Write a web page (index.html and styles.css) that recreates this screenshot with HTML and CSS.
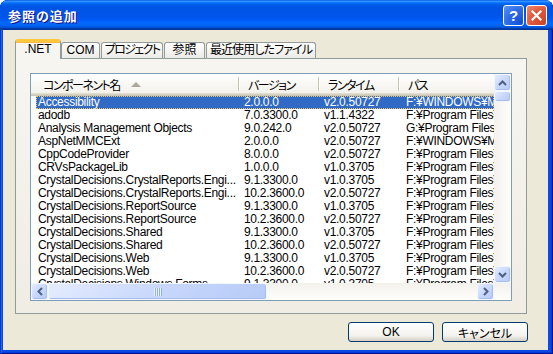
FILE: index.html
```html
<!DOCTYPE html>
<html lang="ja">
<head>
    <meta charset="UTF-8">
    <title>参照の追加</title>
    <link rel="stylesheet" href="styles.css">
</head>
<body>

    <div class="window">
        <!-- Title bar -->
        <div class="titlebar">
            <span class="title">参照の追加</span>
            <div class="caption-buttons">
                <div class="cap-btn help">?</div>
                <div class="cap-btn close">
                    <svg width="11" height="11" viewBox="0 0 11 11">
                        <path d="M1.5 1.5 L9.5 9.5 M9.5 1.5 L1.5 9.5" stroke="#ffffff" stroke-width="2.2" stroke-linecap="square" fill="none"/>
                    </svg>
                </div>
            </div>
        </div>

        <div class="client">
            <!-- Tabs -->
            <ul class="tabs">
                <li class="tab tab-net active">.NET</li>
                <li class="tab tab-com">COM</li>
                <li class="tab tab-project">プロジェクト</li>
                <li class="tab tab-ref">参照</li>
                <li class="tab tab-recent">最近使用したファイル</li>
            </ul>

            <div class="tab-panel">
                <div class="listview">
                    <div class="lv-body">
                        <div class="lv-view">
                            <div class="lv-header">
                                <div class="col-h first">コンポーネント名
                                    <svg class="sort-arrow" width="10" height="6" viewBox="0 0 10 6">
                                        <path d="M0 6 L5 1 L10 6 Z" fill="#aca899"/>
                                    </svg>
                                </div>
                                <div class="col-h">バージョン</div>
                                <div class="col-h">ランタイム</div>
                                <div class="col-h">パス</div>
                            </div>

                            <div class="lv-rows">
                                <div class="row selected"><span>Accessibility</span><span>2.0.0.0</span><span>v2.0.50727</span><span>F:¥WINDOWS¥Microsoft.NET¥Framework</span></div>
                                <div class="row"><span>adodb</span><span>7.0.3300.0</span><span>v1.1.4322</span><span>F:¥Program Files¥Microsoft.NET</span></div>
                                <div class="row"><span>Analysis Management Objects</span><span>9.0.242.0</span><span>v2.0.50727</span><span>G:¥Program Files¥Microsoft SQL</span></div>
                                <div class="row"><span>AspNetMMCExt</span><span>2.0.0.0</span><span>v2.0.50727</span><span>F:¥WINDOWS¥Microsoft.NET¥Framework</span></div>
                                <div class="row"><span>CppCodeProvider</span><span>8.0.0.0</span><span>v2.0.50727</span><span>F:¥Program Files¥Microsoft Visual</span></div>
                                <div class="row"><span>CRVsPackageLib</span><span>1.0.0.0</span><span>v1.0.3705</span><span>F:¥Program Files¥Common Files</span></div>
                                <div class="row"><span>CrystalDecisions.CrystalReports.Engi...</span><span>9.1.3300.0</span><span>v1.0.3705</span><span>F:¥Program Files¥Common Files</span></div>
                                <div class="row"><span>CrystalDecisions.CrystalReports.Engi...</span><span>10.2.3600.0</span><span>v2.0.50727</span><span>F:¥Program Files¥Common Files</span></div>
                                <div class="row"><span>CrystalDecisions.ReportSource</span><span>9.1.3300.0</span><span>v1.0.3705</span><span>F:¥Program Files¥Common Files</span></div>
                                <div class="row"><span>CrystalDecisions.ReportSource</span><span>10.2.3600.0</span><span>v2.0.50727</span><span>F:¥Program Files¥Common Files</span></div>
                                <div class="row"><span>CrystalDecisions.Shared</span><span>9.1.3300.0</span><span>v1.0.3705</span><span>F:¥Program Files¥Common Files</span></div>
                                <div class="row"><span>CrystalDecisions.Shared</span><span>10.2.3600.0</span><span>v2.0.50727</span><span>F:¥Program Files¥Common Files</span></div>
                                <div class="row"><span>CrystalDecisions.Web</span><span>9.1.3300.0</span><span>v1.0.3705</span><span>F:¥Program Files¥Common Files</span></div>
                                <div class="row"><span>CrystalDecisions.Web</span><span>10.2.3600.0</span><span>v2.0.50727</span><span>F:¥Program Files¥Common Files</span></div>
                                <div class="row"><span>CrystalDecisions.Windows.Forms</span><span>9.1.3300.0</span><span>v1.0.3705</span><span>F:¥Program Files¥Common Files</span></div>
                            </div>
                        </div>

                        <!-- Vertical scrollbar -->
                        <div class="vscroll">
                            <div class="sb-btn">
                                <svg width="9" height="6" viewBox="0 0 9 6"><path d="M1 5 L4.5 1.5 L8 5" stroke="#4d6185" stroke-width="2" fill="none"/></svg>
                            </div>
                            <div class="sb-thumb v"></div>
                            <div class="sb-track"></div>
                            <div class="sb-btn">
                                <svg width="9" height="6" viewBox="0 0 9 6"><path d="M1 1 L4.5 4.5 L8 1" stroke="#4d6185" stroke-width="2" fill="none"/></svg>
                            </div>
                        </div>
                    </div>

                    <!-- Horizontal scrollbar -->
                    <div class="hscroll-row">
                        <div class="hscroll">
                            <div class="sb-btn">
                                <svg width="6" height="9" viewBox="0 0 6 9"><path d="M5 1 L1.5 4.5 L5 8" stroke="#4d6185" stroke-width="2" fill="none"/></svg>
                            </div>
                            <div class="sb-thumb h"><span class="grip"></span></div>
                            <div class="sb-track"></div>
                            <div class="sb-btn">
                                <svg width="6" height="9" viewBox="0 0 6 9"><path d="M1 1 L4.5 4.5 L1 8" stroke="#4d6185" stroke-width="2" fill="none"/></svg>
                            </div>
                        </div>
                        <div class="sb-corner"></div>
                    </div>
                </div>
            </div>

            <div class="dialog-buttons">
                <button class="btn">OK</button>
                <button class="btn">キャンセル</button>
            </div>
        </div>
    </div>

</body>
</html>
```

FILE: styles.css
```css
/* Page */
html, body {
    margin: 0;
    padding: 0;
    background: #ffffff;
}

body {
    font-family: "Liberation Sans", "Noto Sans CJK JP", sans-serif;
    font-size: 12px;
    font-feature-settings: "palt";
    color: #000000;
}

/* XP window frame */
.window {
    width: 553px;
    height: 354px;
    display: flex;
    flex-direction: column;
    background: #0a4ae0;
    border-radius: 8px 8px 0 0;
    overflow: hidden;
    box-shadow: inset 1px 0 #0831d9, inset -1px -1px #00138c, inset 2px 0 #166aee, inset -2px -2px #003bda;
}

/* Title bar */
.titlebar {
    flex: none;
    height: 30px;
    display: flex;
    align-items: center;
    justify-content: space-between;
    padding: 0 6px 0 8px;
    background: linear-gradient(to bottom, #0058ee 0%, #3593ff 4%, #288eff 6%, #127dff 8%, #036ffc 10%, #0262ee 14%, #0057e5 20%, #0054e3 24%, #0055eb 56%, #005bf5 66%, #026afe 76%, #0062ef 86%, #0052d6 92%, #0040ab 94%, #003092 100%);
    border-radius: 8px 8px 0 0;
}

.title {
    color: #ffffff;
    font-family: "Noto Sans CJK JP", sans-serif;
    font-weight: 700;
    font-size: 13px;
    letter-spacing: 1px;
    text-shadow: 1px 1px #0f1089;
    margin-top: 1px;
}

.caption-buttons {
    display: flex;
    gap: 2px;
    margin-top: 1px;
}

.cap-btn {
    width: 21px;
    height: 21px;
    box-sizing: border-box;
    border: 1px solid #ffffff;
    border-radius: 3px;
    display: flex;
    align-items: center;
    justify-content: center;
}

.help {
    background: radial-gradient(circle at 90% 90%, #1150d8 0%, #2f6ae4 55%, #5b95f9 100%);
    color: #ffffff;
    font-family: "Liberation Sans", sans-serif;
    font-weight: 700;
    font-size: 15px;
}

.close {
    background: radial-gradient(circle at 90% 90%, #cc4628 0%, #e0573a 55%, #f08c72 100%);
}

/* Dialog body */
.client {
    flex: 1;
    margin: 0 5px 4px 3px;
    padding: 9px 0 0 12px;
    background: #ece9d8;
    display: flex;
    flex-direction: column;
}

/* Tabs */
.tabs {
    list-style: none;
    margin: 0;
    padding: 0;
    height: 19px;
    display: flex;
    align-items: flex-end;
    position: relative;
    z-index: 1;
}

.tab {
    height: 16px;
    box-sizing: border-box;
    margin-right: 1px;
    border: 1px solid #919b9c;
    border-bottom: none;
    border-radius: 3px 3px 0 0;
    background: linear-gradient(#ffffff, #ecebe6);
    line-height: 15px;
    text-align: center;
    white-space: nowrap;
}

.tab.active {
    height: 20px;
    margin-bottom: -1px;
    margin-right: 0;
    border-top: 3px solid #ffc83c;
    box-shadow: inset 0 1px #f5b84a;
    background: #f6f5f0;
    line-height: 15px;
}

.tab-net { width: 46px; }
.tab-com { width: 39px; }
.tab-project { width: 62px; letter-spacing: -1.6px; }
.tab-ref { width: 41px; }
.tab-recent { width: 110px; letter-spacing: -0.9px; }

.tab-panel {
    width: 512px;
    height: 256px;
    box-sizing: border-box;
    border: 1px solid #919b9c;
    background: linear-gradient(#f6f5f0, #efede4);
    padding: 14px 14px 12px 14px;
}

/* List view */
.listview {
    width: 482px;
    height: 228px;
    box-sizing: border-box;
    border: 1px solid #7f9db9;
    background: #ffffff;
    display: flex;
    flex-direction: column;
}

.lv-body {
    display: flex;
    height: 209px;
}

.lv-view {
    width: 463px;
    overflow: hidden;
}

.lv-header {
    display: grid;
    grid-template-columns: 207px 80px 80px 1fr;
    height: 22px;
    background: linear-gradient(#ffffff, #f1efe8);
    box-shadow: inset 0 -1px #cbc7b8, inset 0 -2px #d6d2c2, inset 0 -3px #e2decd;
}

.col-h {
    display: flex;
    align-items: center;
    padding: 0 0 2px 10px;
    white-space: nowrap;
    letter-spacing: -1.5px;
}

.col-h.first {
    padding-left: 12px;
}

.col-h + .col-h {
    background:
        linear-gradient(#c7c5b2, #c7c5b2) no-repeat 0 3px / 1px 14px,
        linear-gradient(#ffffff, #ffffff) no-repeat 1px 3px / 1px 14px;
}

.sort-arrow {
    margin-left: 11px;
    margin-bottom: 1px;
}

.lv-rows {
    padding-left: 5px;
}

.row {
    display: grid;
    grid-template-columns: 202px 80px 80px 260px;
    height: 13px;
    line-height: 13px;
    white-space: nowrap;
    letter-spacing: -0.3px;
}

.row span {
    padding-left: 6px;
    overflow: hidden;
}

.row span:first-child {
    padding-left: 2px;
}

.row span:last-child {
    padding-left: 8px;
}

.row.selected {
    background: #316ac5;
    color: #ffffff;
    outline: 1px dotted #e6c26a;
    outline-offset: -1px;
}

/* Scrollbars */
.vscroll {
    width: 17px;
    display: flex;
    flex-direction: column;
    background: linear-gradient(to right, #f3f1ec, #fefefb);
}

.hscroll-row {
    display: flex;
    height: 17px;
}

.hscroll {
    width: 463px;
    display: flex;
    background: linear-gradient(#f3f1ec, #fefefb);
}

.sb-corner {
    flex: 1;
    background: linear-gradient(#f3f1ec, #fefefb);
}

.sb-btn,
.sb-thumb {
    flex: none;
    box-sizing: border-box;
    border: 1px solid #f2f6fe;
    border-radius: 3px;
    background: linear-gradient(135deg, #e4ecfe 0%, #c8d7fc 50%, #b6cbf7 100%);
    box-shadow: inset -1px -1px #a7bdee;
    display: flex;
    align-items: center;
    justify-content: center;
}

.sb-btn {
    width: 17px;
    height: 17px;
}

.sb-thumb.v {
    height: 11px;
}

.sb-thumb.h {
    width: 219px;
}

.sb-track {
    flex: 1;
}

.grip {
    width: 8px;
    height: 8px;
    background: repeating-linear-gradient(to right, #eef4fe 0, #eef4fe 1px, #8cb0f8 1px, #8cb0f8 2px);
}

/* OK / Cancel */
.dialog-buttons {
    display: flex;
    justify-content: flex-end;
    gap: 8px;
    margin: 8px 20px 0 0;
}

.btn {
    width: 86px;
    height: 20px;
    padding: 0;
    border: 1px solid #003c74;
    border-radius: 3px;
    background: linear-gradient(#ffffff, #f3f2ed 70%, #d6d0c5);
    font-family: "Liberation Sans", "Noto Sans CJK JP", sans-serif;
    font-size: 12px;
    font-feature-settings: "palt";
    color: #000000;
}
```
